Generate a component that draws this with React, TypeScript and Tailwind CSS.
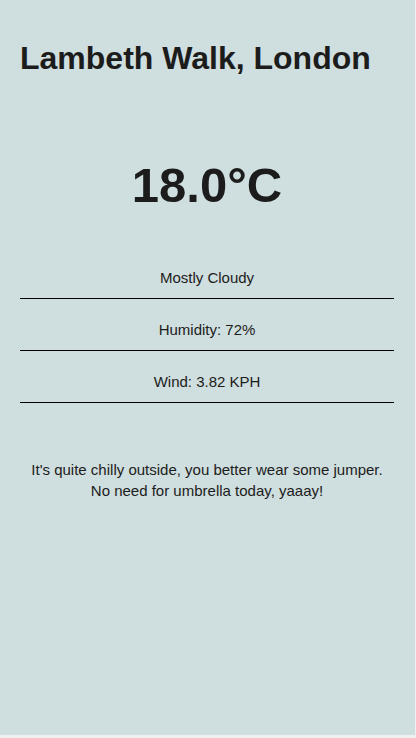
export default function App() {
  const rows = ['Mostly Cloudy', 'Humidity: 72%', 'Wind: 3.82 KPH'];

  return (
    <div className="min-h-screen bg-[#f0f0f0]" style={{ fontFamily: '"Liberation Sans", Arial, sans-serif' }}>
      <div className="w-[415px] h-[735px] bg-[#cfdede] pl-5 pr-[21px] pt-10 text-[#1c1c1c]">
        <h1 className="text-[32px] leading-[37px] font-bold">Lambeth Walk, London</h1>

        <div className="mt-[78px] text-center text-[49px] leading-[60px] font-bold">18.0°C</div>

        <div className="mt-[32px]">
          {rows.map((r) => (
            <div key={r} className="pt-[21px] pb-[10px] border-b border-black text-center text-[15px] leading-5">
              {r}
            </div>
          ))}
        </div>

        <p className="mt-[56px] text-center text-[15px] leading-[21px]">
          It's quite chilly outside, you better wear some jumper.
          <br />
          No need for umbrella today, yaaay!
        </p>
      </div>
    </div>
  );
}
